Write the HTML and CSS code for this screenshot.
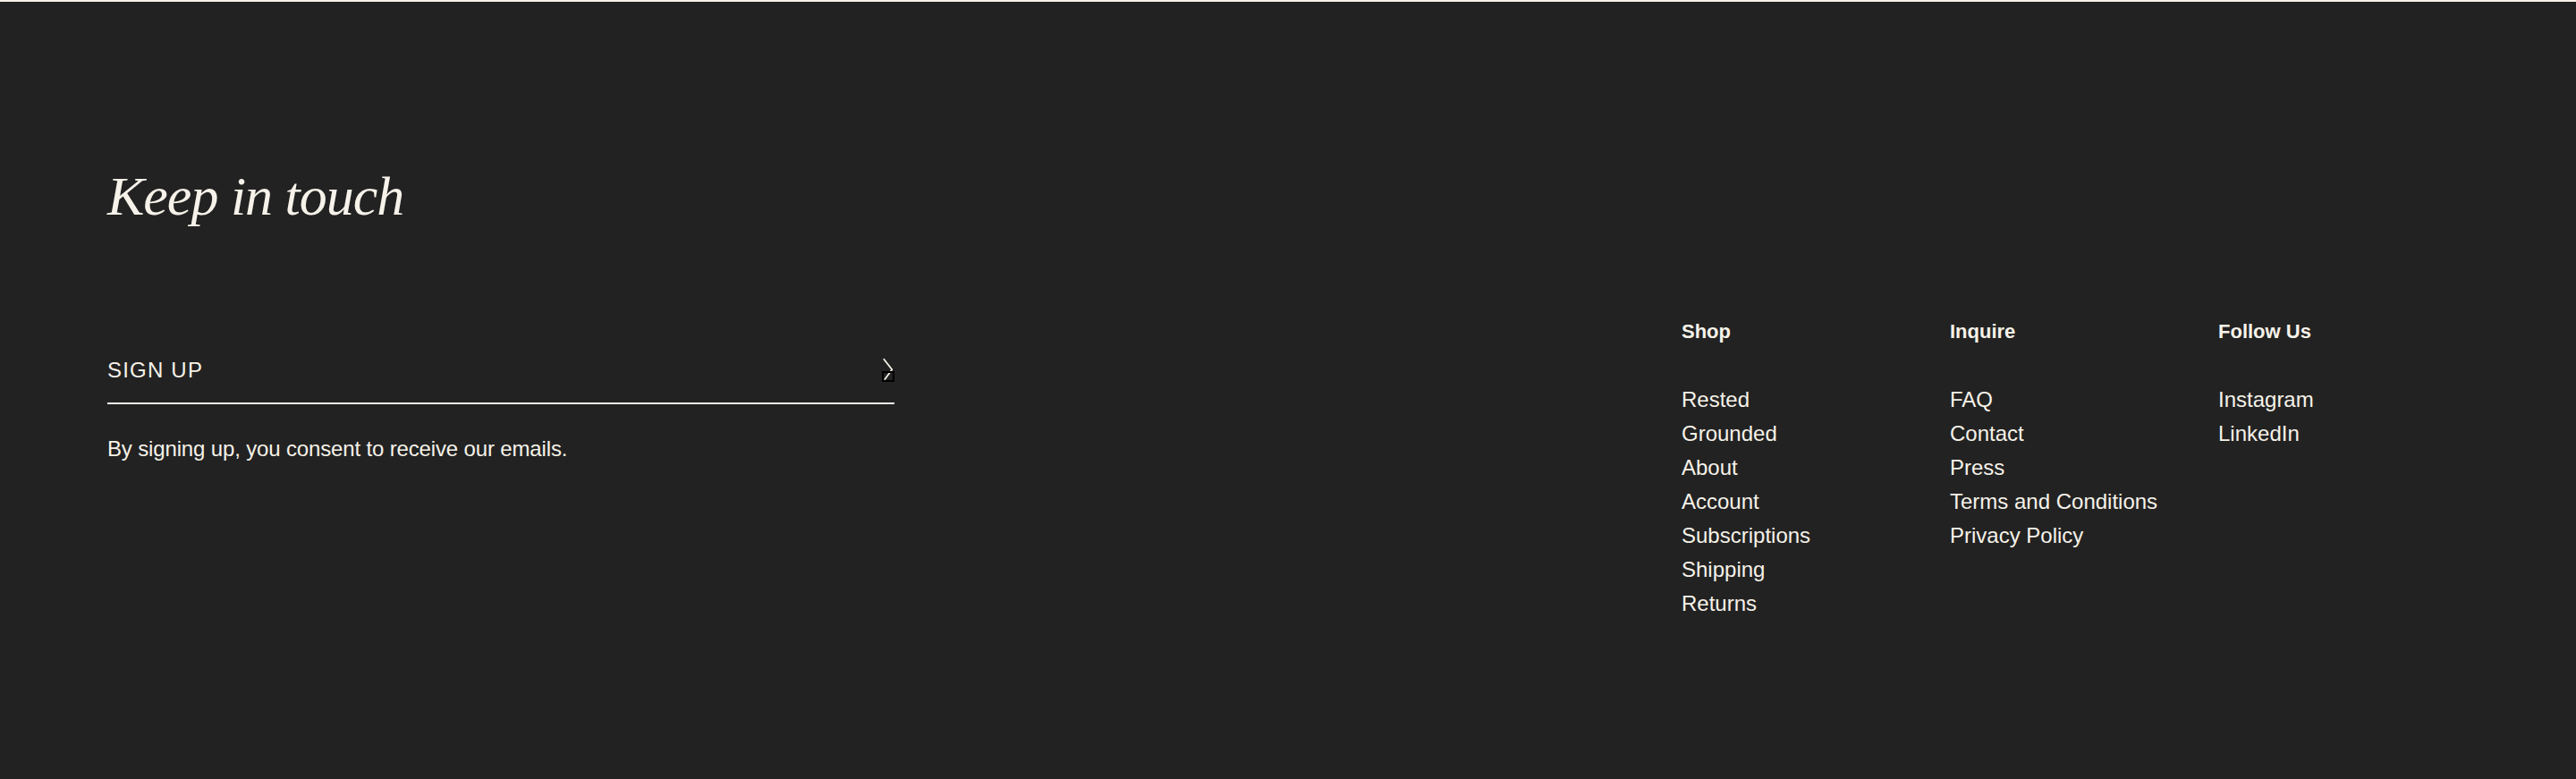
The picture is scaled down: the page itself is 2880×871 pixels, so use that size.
FILE: index.html
```html
<!DOCTYPE html>
<html lang="en">
<head>
<meta charset="utf-8">
<title>Footer</title>
<link rel="stylesheet" href="styles.css">
</head>
<body>
<footer class="footer">
  <div class="left">
    <h2 class="heading">Keep in touch</h2>
    <form class="signup">
      <div class="signup-row">
        <span class="signup-label">SIGN UP</span>
        <span class="submit">
          <svg class="chevron" width="14" height="26" viewBox="0 0 14 26" aria-hidden="true">
            <path d="M2.3 1.7 L11.3 13.3 L3.3 24" fill="none" stroke="#f6f2e9" stroke-width="1.8" stroke-linecap="round" stroke-linejoin="round"/>
          </svg>
          <span class="submit-box"></span>
        </span>
      </div>
      <p class="consent">By signing up, you consent to receive our emails.</p>
    </form>
  </div>
  <nav class="nav">
    <div class="col">
      <h3 class="col-title">Shop</h3>
      <ul class="links">
        <li>Rested</li>
        <li>Grounded</li>
        <li>About</li>
        <li>Account</li>
        <li>Subscriptions</li>
        <li>Shipping</li>
        <li>Returns</li>
      </ul>
    </div>
    <div class="col">
      <h3 class="col-title">Inquire</h3>
      <ul class="links">
        <li>FAQ</li>
        <li>Contact</li>
        <li>Press</li>
        <li>Terms and Conditions</li>
        <li>Privacy Policy</li>
      </ul>
    </div>
    <div class="col">
      <h3 class="col-title">Follow Us</h3>
      <ul class="links">
        <li>Instagram</li>
        <li>LinkedIn</li>
      </ul>
    </div>
  </nav>
</footer>
</body>
</html>
```

FILE: styles.css
```css
html, body {
  margin: 0;
  padding: 0;
  background: #222222;
}

.footer {
  box-sizing: border-box;
  height: 871px;
  border-top: 2px solid #f6f2e9;
  background: #222222;
  color: #f6f2e9;
  font-family: "Liberation Sans", Arial, sans-serif;
  display: flex;
  align-items: flex-start;
  padding: 183px 100px 0 120px;
}

.left {
  width: 880px;
}

.heading {
  margin: 0;
  font-family: "Liberation Serif", "Times New Roman", serif;
  font-style: italic;
  font-weight: 400;
  font-size: 62px;
  line-height: 68px;
  letter-spacing: -1px;
}

.signup {
  margin: 149px 0 0 0;
}

.signup-row {
  display: flex;
  justify-content: space-between;
  align-items: flex-start;
  padding-bottom: 24px;
  border-bottom: 2px solid #f6f2e9;
}

.signup-label {
  font-size: 24px;
  line-height: 24px;
  letter-spacing: 1.2px;
}

.submit {
  position: relative;
  display: block;
  width: 14px;
  height: 26px;
  margin-top: -2px;
}

.chevron {
  display: block;
}

.submit-box {
  position: absolute;
  left: 0;
  top: 15px;
  width: 14px;
  height: 12px;
  box-sizing: border-box;
  border: 2px solid #000000;
}

.consent {
  margin: 38px 0 0 0;
  font-size: 24px;
  line-height: 24px;
  letter-spacing: -0.15px;
}

.nav {
  margin-left: auto;
  margin-top: 174px;
  display: grid;
  grid-template-columns: repeat(3, 300px);
}

.col-title {
  margin: 0;
  font-size: 22px;
  line-height: 24px;
  font-weight: 700;
}

.links {
  list-style: none;
  margin: 45px 0 0 0;
  padding: 0;
  font-size: 24px;
  line-height: 38px;
}
```
